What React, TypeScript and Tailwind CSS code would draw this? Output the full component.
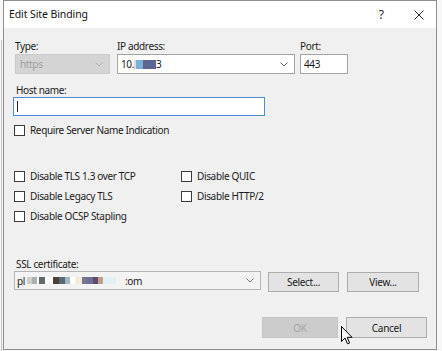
import React from "react";

const FONT = { fontFamily: '"Noto Sans", "Open Sans", sans-serif' };

function Chevron({ color = "#606060" }: { color?: string }) {
  return (
    <svg width="8" height="5" viewBox="0 0 8 5" className="shrink-0">
      <path d="M0.5 0.5 L4 4 L7.5 0.5" fill="none" stroke={color} strokeWidth="1" />
    </svg>
  );
}

function Check({ label }: { label: string }) {
  return (
    <div className="flex items-center h-[20px] gap-[5px]">
      <div className="w-[11px] h-[11px] border border-[#3a3a3a] bg-white shrink-0" />
      <span className="text-[10px] tracking-[-0.35px] text-[#1a1a1a] leading-none">{label}</span>
    </div>
  );
}

function Btn({ label, className = "", disabled = false }: { label: string; className?: string; disabled?: boolean }) {
  return (
    <div
      className={
        "flex items-center justify-center text-[10px] tracking-[-0.3px] leading-none border " +
        (disabled
          ? "bg-[#cccccc] border-[#c4c4c4] text-[#a6a6a6] "
          : "bg-[#e3e3e3] border-[#adadad] text-[#1a1a1a] ") +
        className
      }
    >
      {label}
    </div>
  );
}

const certBlocks: [number, string][] = [
  [5, "#cfcfc8"],
  [5, "#a9b0ad"],
  [2, "#ffffff"],
  [6, "#5f6a6f"],
  [8, "#ffffff"],
  [6, "#4a3f3a"],
  [6, "#5b6870"],
  [5, "#9fb6c5"],
  [5, "#ffffff"],
  [7, "#f0ecd8"],
  [5, "#7c7590"],
  [6, "#6f6f95"],
  [5, "#5b4d6d"],
  [5, "#c49a8a"],
  [13, "#e3f1f5"],
];

export default function App() {
  return (
    <div className="relative w-[442px] h-[351px] bg-[#f7f7f7] overflow-hidden" style={FONT}>
      <div className="absolute left-[1px] top-[40px] w-px h-[311px] bg-[#c4c4c4]" />
      <div className="ml-[3px] w-[434px] h-[350px] border border-[#8e8e8e] bg-[#f0f0f0] flex flex-col">
        {/* Title bar */}
        <div className="h-[27px] bg-white flex items-center pl-[5px] shrink-0">
          <span className="text-[10.5px] tracking-[-0.1px] text-[#111]">Edit Site Binding</span>
          <div className="flex-1" />
          <span className="text-[12px] text-[#222] mr-[30px]">?</span>
          <svg width="10" height="10" viewBox="0 0 10 10" className="mr-[12px]">
            <path d="M0.5 0.5 L9.5 9.5 M9.5 0.5 L0.5 9.5" stroke="#222" strokeWidth="1" />
          </svg>
        </div>

        {/* Body */}
        <div className="flex flex-col pt-[11px]">
          {/* Row 1 */}
          <div className="flex pl-[11px]">
            <div className="w-[95px] flex flex-col">
              <div className="h-[14px] text-[10px] tracking-[-0.35px] leading-[14px] text-[#1a1a1a] mb-[1px]">Type:</div>
              <div className="h-[20px] bg-[#d4d4d4] border border-[#cacaca] flex items-center pl-[4px] pr-[6px]">
                <span className="flex-1 text-[10px] tracking-[-0.35px] text-[#9e9e9e] leading-none">https</span>
                <Chevron color="#b0b0b0" />
              </div>
            </div>
            <div className="w-[178px] ml-[7px] flex flex-col">
              <div className="h-[14px] text-[10px] tracking-[-0.35px] leading-[14px] text-[#1a1a1a] mb-[1px]">IP address:</div>
              <div className="h-[20px] bg-white border border-[#a3a3a3] flex items-center pl-[3px] pr-[6px]">
                <span className="text-[10px] tracking-[-0.35px] text-[#1a1a1a] leading-none">10.</span>
                <div className="w-[2px] h-[9px] bg-[#e6d8d8]" />
                <div className="w-[7px] h-[9px] bg-[#7ab0db]" />
                <div className="w-[13px] h-[9px] bg-[#5c6690]" />
                <span className="text-[10px] tracking-[-0.35px] text-[#1a1a1a] leading-none">3</span>
                <div className="flex-1" />
                <Chevron />
              </div>
            </div>
            <div className="w-[48px] ml-[5px] flex flex-col">
              <div className="h-[14px] text-[10px] tracking-[-0.35px] leading-[14px] text-[#1a1a1a] mb-[1px]">Port:</div>
              <div className="h-[20px] bg-white border border-[#a3a3a3] flex items-center pl-[3px]">
                <span className="text-[10px] tracking-[-0.35px] text-[#1a1a1a] leading-none">443</span>
              </div>
            </div>
          </div>

          {/* Host name */}
          <div className="mt-[9px] pl-[12px] h-[14px] text-[10px] tracking-[-0.35px] leading-[14px] text-[#1a1a1a]">Host name:</div>
          <div className="ml-[9px] w-[252px] h-[19px] bg-white border border-[#4c8ed6] flex items-center pl-[3px]">
            <div className="w-px h-[11px] bg-[#222]" />
          </div>

          <div className="mt-[4px] pl-[10px]">
            <Check label="Require Server Name Indication" />
          </div>

          {/* Protocol options */}
          <div className="mt-[26px] pl-[10px] flex">
            <div className="w-[167px] flex flex-col">
              <Check label="Disable TLS 1.3 over TCP" />
              <Check label="Disable Legacy TLS" />
              <Check label="Disable OCSP Stapling" />
            </div>
            <div className="flex flex-col">
              <Check label="Disable QUIC" />
              <Check label="Disable HTTP/2" />
            </div>
          </div>

          {/* SSL certificate */}
          <div className="mt-[31px] pl-[12px] h-[14px] text-[10px] tracking-[-0.35px] leading-[14px] text-[#1a1a1a]">SSL certificate:</div>
          <div className="flex pl-[10px] items-start">
            <div className="w-[247px] h-[19px] bg-[#f3f3f3] border border-[#b5b5b5] flex items-center pl-[2px] pr-[6px]">
              <span className="text-[10px] tracking-[-0.35px] text-[#1a1a1a] leading-none">pl</span>
              <div className="flex items-center ml-[2px]">
                {certBlocks.map(([w, c], i) => (
                  <div key={i} className="h-[7px]" style={{ width: w, background: c }} />
                ))}
              </div>
              <span className="ml-[9px] text-[10px] tracking-[-0.35px] text-[#1a1a1a] leading-none">:om</span>
              <div className="flex-1" />
              <Chevron color="#707070" />
            </div>
            <Btn label="Select..." className="ml-[7px] mt-[1px] w-[71px] h-[20px]" />
            <Btn label="View..." className="ml-[8px] mt-[1px] w-[72px] h-[20px]" />
          </div>

          {/* OK / Cancel */}
          <div className="mt-[25px] flex justify-end pr-[9px]">
            <Btn label="OK" disabled className="w-[76px] h-[21px]" />
            <Btn label="Cancel" className="ml-[8px] w-[81px] h-[21px]" />
          </div>
        </div>
      </div>

      {/* mouse cursor */}
      <svg className="absolute left-[341px] top-[326px]" width="12" height="19" viewBox="0 0 12 19">
        <path
          d="M0.5 0.5 L0.5 15.5 L4 12 L6.5 17.8 L8.6 16.9 L6.2 11.3 L11 11.3 Z"
          fill="#ffffff"
          stroke="#000000"
          strokeWidth="1"
          strokeLinejoin="round"
        />
      </svg>
    </div>
  );
}
